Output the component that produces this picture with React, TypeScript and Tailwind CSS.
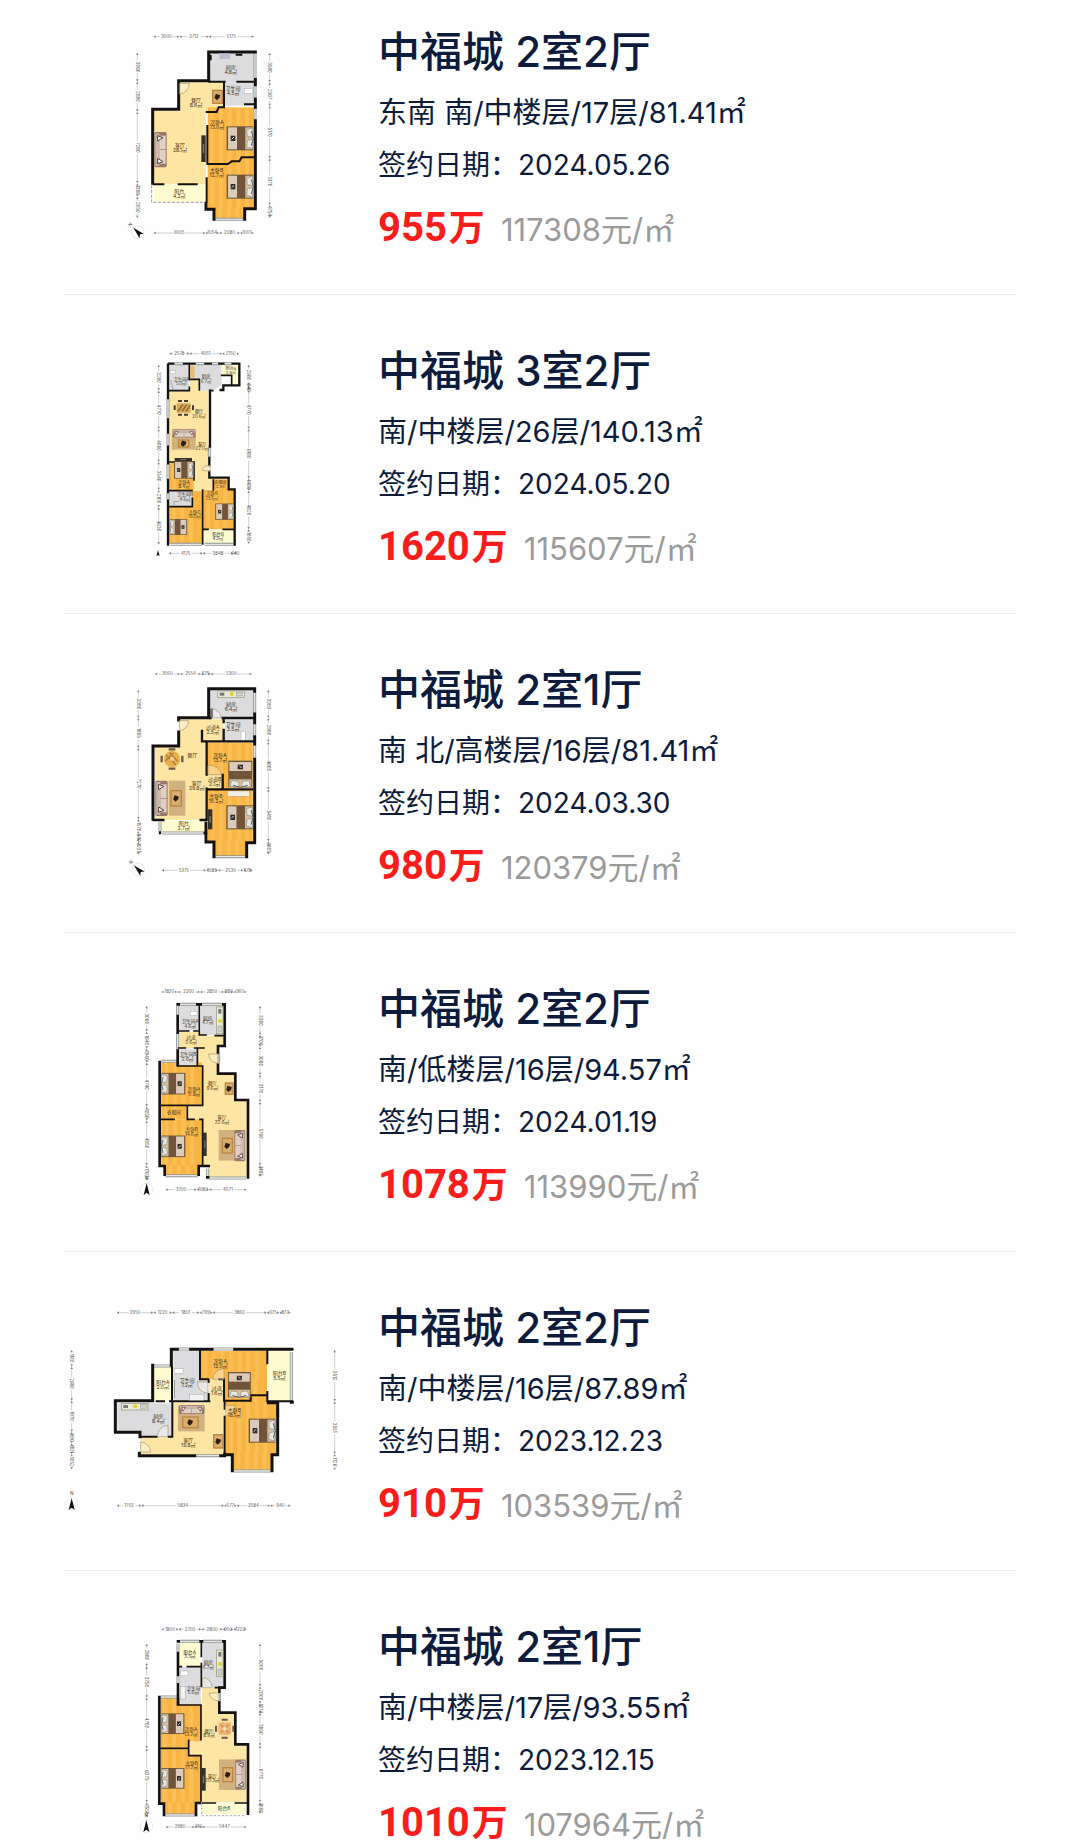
import type { ReactNode } from 'react';

const WALL = '#141210';
const CREAM = '#fde5a4';
const PALE = '#fefbd0';
const WOOD = '#f9b544';
const TILE = '#dcdcdf';

const Room = ({ points, fill }: { points: string; fill: string }) => <polygon points={points} fill={fill} />;

const Floor = ({ x, y, w, h }: { x: number; y: number; w: number; h: number }) => (
  <g>
    <rect x={x} y={y} width={w} height={h} fill={WOOD} />
    {Array.from({ length: Math.floor(w / 26) }, (_, i) => (
      <rect key={i} x={x + 8 + i * 26} y={y} width={12} height={h} fill="#fdc763" opacity={0.6} />
    ))}
  </g>
);

const Wall = ({ d, w = 9 }: { d: string; w?: number }) => (
  <path d={d} fill="none" stroke={WALL} strokeWidth={w} strokeLinecap="square" />
);

const Glass = ({ d }: { d: string }) => (
  <g fill="none">
    <path d={d} stroke="#8d9490" strokeWidth={9} />
    <path d={d} stroke="#e3e8e5" strokeWidth={4} />
  </g>
);

const Door = ({ d }: { d: string }) => <path d={d} fill="#fff" fillOpacity={0.35} stroke="#a39568" strokeWidth={2} />;

// head of the bed points right at 0 degrees
const Bed = ({ x, y, r = 0, s = 1 }: { x: number; y: number; r?: number; s?: number }) => (
  <g transform={`translate(${x} ${y}) rotate(${r}) scale(${s})`}>
    <rect x={-40} y={-36} width={80} height={72} fill="#6b563d" />
    <rect x={-36} y={-33} width={27} height={66} fill="#dccbb8" />
    <rect x={-9} y={-33} width={25} height={66} fill="#70553a" />
    <rect x={16} y={-33} width={24} height={66} fill="#d6c0a2" />
    <path d="M20 -26 L38 -31 L38 -3 L22 -6 Z M20 26 L38 31 L38 3 L22 6 Z" fill="#e9e6dd" stroke="#8d8c86" strokeWidth={2} />
    <path d="M34 -22 L40 0 L34 22" fill="none" stroke="#4e6470" strokeWidth={3} />
    <rect x={-28} y={-8} width={14} height={16} fill="#332b28" />
    <path d="M-25 3 L-18 -4" stroke="#ddd" strokeWidth={3} />
  </g>
);

const Sofa = ({ x, y, r = 0, s = 1 }: { x: number; y: number; r?: number; s?: number }) => (
  <g transform={`translate(${x} ${y}) rotate(${r}) scale(${s})`}>
    <rect x={-18} y={-53} width={37} height={106} rx={5} fill="#9a7869" />
    <rect x={-15} y={-49} width={12} height={98} fill="#cdb9ac" />
    <rect x={-3} y={-42} width={19} height={41} fill="#dfcfc5" />
    <rect x={-3} y={1} width={19} height={41} fill="#dfcfc5" />
    <path d="M-9 -42 L8 -36 L-8 -26 Z M-9 42 L8 36 L-8 26 Z" fill="#eee" stroke="#58423b" strokeWidth={3} />
  </g>
);

const Rug = ({ x, y, w, h }: { x: number; y: number; w: number; h: number }) => (
  <rect x={x} y={y} width={w} height={h} fill="#d2b180" />
);

const CoffeeTable = ({ x, y, w, h }: { x: number; y: number; w: number; h: number }) => (
  <g>
    <rect x={x} y={y} width={w} height={h} fill="#b98646" />
    <rect x={x + 4} y={y + 4} width={w - 8} height={h - 8} fill="#dcae6c" />
    <path d={`M${x + w / 2 - 9} ${y + h / 2 + 3} l4 -12 l13 4 l-2 8 l-8 7 z`} fill="#2a1d14" />
  </g>
);

const Dining = ({ x, y }: { x: number; y: number }) => (
  <g transform={`translate(${x} ${y})`}>
    <path d="M-10 -29 H10 M-10 29 H10 M-31 -10 V10 M31 -10 V10" stroke="#6b5848" strokeWidth={7} />
    <circle r={24} fill="#e8b04d" />
    <path d="M-18 -12 L12 18 M-8 -20 L18 8 M-20 6 L4 -18" stroke="#a97a3e" strokeWidth={4} />
    <circle r={6} fill="#f6d79a" />
  </g>
);

const Media = ({ x, y, w, h }: { x: number; y: number; w: number; h: number }) => (
  <g>
    <rect x={x} y={y} width={w} height={h} fill="#35302a" />
    <rect x={x + w / 3} y={y + h / 3} width={w / 3} height={h / 3} fill="#77726a" />
  </g>
);

const Counter = ({ x, y, r = 0 }: { x: number; y: number; r?: number }) => (
  <g transform={`translate(${x} ${y}) rotate(${r})`}>
    <rect x={-40} y={-10} width={80} height={20} fill="#ebead5" stroke="#908f75" strokeWidth={2} />
    <rect x={-34} y={-5} width={14} height={9} fill="#777" />
    <circle cx={2} cy={-1} r={6} fill="#e2cf2e" />
    <rect x={17} y={-6} width={18} height={11} fill="#cfcfcb" stroke="#777" />
  </g>
);

const Label = ({ x, y, name, area, s = 15 }: { x: number; y: number; name: string; area?: string; s?: number }) => (
  <text x={x} y={y} textAnchor="middle" fontSize={s} fill="#3d3420">
    {name}
    {area && <tspan x={x} dy={s}>{area}</tspan>}
  </text>
);

const Dims = ({ at, stops, labels, vertical = false }: { at: number; stops: number[]; labels: string[]; vertical?: boolean }) => (
  <g transform={vertical ? `translate(${at} 0) rotate(90)` : `translate(0 ${at})`}>
    {labels.map((label, i) => {
      const a = stops[i];
      const b = stops[i + 1];
      const half = label.length * 4 + 3;
      const mid = (a + b) / 2;
      return (
        <g key={i}>
          {b - a > half * 2 + 12 && (
            <path d={`M${a + 4} 0 H${mid - half} M${mid + half} 0 H${b - 4}`} stroke="#bbb" strokeWidth={2} />
          )}
          <path d={`M${a} 0 l7 -4 v8 z M${b} 0 l-7 -4 v8 z`} fill="#888" />
          <text x={mid} y={4} textAnchor="middle" fontSize={13} fill="#555">{label}</text>
        </g>
      );
    })}
  </g>
);

const Compass = ({ x, y, r = 0, ring = true }: { x: number; y: number; r?: number; ring?: boolean }) => (
  <g transform={`translate(${x} ${y}) rotate(${r})`}>
    {ring && <circle r={19} fill="#fff" stroke="#ddd" strokeWidth={2} />}
    {ring ? (
      <path d="M0 -19 L9 17 L0 10 L-9 17 Z" fill="#111" />
    ) : (
      <path d="M0 -10 L5 9 L0 5 L-5 9 Z" fill="#111" />
    )}
    {ring && <text x={0} y={-27} textAnchor="middle" fontSize={14} fill="#444">N</text>}
  </g>
);

const PlanA = () => (
  <g>
    <Room points="388,187 522,187 522,262 468,275 468,493 312,493 312,272 388,272" fill={CREAM} />
    <Room points="312,493 466,493 466,545 312,545" fill={PALE} />
    <Room points="478,97 612,97 612,187 478,187" fill={TILE} />
    <Room points="525,187 612,187 612,257 525,257" fill={TILE} />
    <Floor x={473} y={262} w={138} h={165} />
    <Floor x={473} y={418} w={138} h={152} />
    <Floor x={496} y={565} w={84} h={34} />
    <Glass d="M615 98 V172 M615 198 V232 M615 265 V298 M496 598 H580" />
    <Wall d="M476 180 V96 H616 M616 178 V194 M616 237 V262" />
    <Wall d="M476 182 H386 V268 H308 V490 M616 302 V566 H584 V598 M468 550 V568 H492 V598" />
    <Wall w={6} d="M482 118 V108 M560 104 H574 M522 190 V258 M478 185 H524 M562 185 H610 M585 253 H610 M522 262 H506 L500 276 H470 M472 318 V432 H534 L545 424 H568 L575 412 H610 M470 475 V545 M312 493 H340 M386 493 H440" />
    <path d="M305 496 V547 H464" fill="none" stroke="#666" strokeWidth={2} strokeDasharray="9 5" />
    <Door d="M388 190 H418 A32 32 0 0 1 388 222 Z" />
    <Sofa x={331} y={389} />
    <Media x={454} y={346} w={13} h={80} />
    <CoffeeTable x={486} y={209} w={33} h={43} />
    <rect x={508} y={100} width={32} height={17} fill="#babed0" />
    <rect x={583} y={206} width={25} height={14} fill="#fff" stroke="#999" />
    <Bed x={570} y={355} />
    <Bed x={570} y={500} />
    <Label x={542} y={148} name="厨房" area="4.8㎡" />
    <Label x={549} y={209} name="卫生间" area="4.5㎡" />
    <Label x={438} y={245} name="餐厅" area="8.6㎡" />
    <Label x={390} y={381} name="客厅" area="28.1㎡" />
    <Label x={501} y={312} name="次卧A" area="13.0㎡" />
    <Label x={500} y={456} name="主卧B" area="12.7㎡" />
    <Label x={388} y={518} name="阳台" area="4.2㎡" />
    <Dims at={50} stops={[310, 388, 476, 612]} labels={['3000', '2712', '5175']} />
    <Dims at={639} stops={[310, 466, 507, 570, 612]} labels={['6005', '1054', '2080', '1001']} />
    <Dims vertical at={262} stops={[98, 185, 275, 490, 530, 594]} labels={['3060', '2890', '7280', '1380', '2050']} />
    <Dims vertical at={659} stops={[98, 187, 258, 415, 555, 594]} labels={['3580', '2367', '5170', '5170', '1754']} />
    <Compass x={263} y={636} r={-45} />
  </g>
);

const PlanB = () => (
  <g>
    <Room points="357,75 418,75 418,152 357,152" fill={TILE} />
    <Room points="422,75 515,75 515,136 488,152 448,152 448,120 422,116" fill={TILE} />
    <Room points="515,75 568,75 568,135 545,135 545,108 515,108" fill={PALE} />
    <Room points="420,120 446,120 446,152 476,152 476,413 500,413 500,450 430,450 430,365 357,365 357,152 420,152" fill={CREAM} />
    <Floor x={357} y={368} w={74} h={82} />
    <Floor x={357} y={452} w={101} h={160} />
    <Floor x={460} y={450} w={91} h={118} />
    <Floor x={490} y={418} w={43} h={32} />
    <Room points="357,452 426,452 426,500 357,500" fill={TILE} />
    <Room points="461,569 551,569 551,611 461,611" fill={PALE} />
    <Glass d="M354 177 V235 M354 280 V317 M354 372 V418 M354 458 V480 M374 71 H398 M438 71 H462 M484 71 H506 M522 71 H546 M362 613 H456 M464 613 H550 M478 322 V352" />
    <Wall w={7} d="M357 71 H370 M402 71 H434 M466 71 H482 M508 71 H520 M548 71 H568 V136 H520 V150 H512 M354 74 V174 M354 238 V278 M354 320 V370 M354 420 V456 M354 482 V614 M480 152 V320 M478 354 V376 M478 395 V413 H536 V448 H554 V614" />
    <Wall w={5} d="M418 74 V118 H448 V150 M418 142 V152 H358 M358 366 H432 V420 M358 452 H426 M427 475 V500 H358 M458 450 V612 M462 568 H474 M520 568 H550 M490 420 V450 M515 106 H545 V134 M480 152 H488" />
    <rect x={420} y={77} width={14} height={37} fill="#e0c274" />
    <rect x={360} y={92} width={16} height={9} fill="#fff" stroke="#888" />
    <path d="M362 120 L370 150 M372 497 V484 H388" fill="none" stroke="#888" strokeWidth={2} />
    <Door d="M480 376 Q458 376 457 391 L480 394 Z" />
    <rect x={380} y={190} width={42} height={28} fill="#d6a95a" />
    <path d="M384 214 L398 194 M396 214 L410 194 M408 214 L420 196" stroke="#8a6230" strokeWidth={4} />
    <path d="M384 183 H396 M402 183 H414 M384 224 H396 M402 224 H414 M374 196 V210 M429 196 V210" stroke="#443a35" strokeWidth={6} />
    <Rug x={365} y={285} w={72} h={44} />
    <Sofa x={402} y={280} r={90} s={0.66} />
    <CoffeeTable x={384} y={298} w={34} h={25} />
    <Media x={374} y={354} w={52} h={9} />
    <Bed x={401} y={390} s={0.72} />
    <Bed x={523} y={515} s={0.68} />
    <Bed x={385} y={561} r={180} s={0.66} />
    <Label s={13} x={394} y={122} name="卫生间A" area="5.0㎡" />
    <Label s={13} x={468} y={115} name="厨房" area="6.7㎡" />
    <Label s={12} x={543} y={90} name="阳台A" area="2.9㎡" />
    <Label s={13} x={447} y={220} name="餐厅" area="20.6㎡" />
    <Label s={13} x={457} y={318} name="客厅" area="22.0㎡" />
    <Label s={13} x={402} y={431} name="次卧A" area="8.4㎡" />
    <Label s={12} x={511} y={432} name="衣帽间" area="2.1㎡" />
    <Label s={13} x={405} y={469} name="卫生间B" area="4.6㎡" />
    <Label s={13} x={486} y={466} name="次卧B" area="13.5㎡" />
    <Label s={13} x={434} y={521} name="主卧C" area="16.0㎡" />
    <Label s={13} x={504} y={588} name="阳台B" area="4.3㎡" />
    <Dims at={41} stops={[358, 418, 516, 568]} labels={['2578', '4051', '2150']} />
    <Dims at={640} stops={[356, 458, 550, 562]} labels={['4175', '3848', '640']} />
    <Dims vertical at={326} stops={[74, 152, 267, 366, 450, 502, 614]} labels={['3280', '4770', '4080', '3540', '2100', '4630']} />
    <Dims vertical at={596} stops={[74, 136, 150, 267, 416, 452, 568, 612]} labels={['2580', '640', '4770', '6180', '1480', '4820', '1810']} />
    <Compass x={324} y={640} ring={false} />
  </g>
);

const PlanC = () => (
  <g>
    <Room points="388,178 520,178 520,242 470,242 470,345 516,345 516,387 470,387 470,480 315,480 315,262 388,262" fill={CREAM} />
    <Room points="332,483 466,483 466,518 332,518" fill={PALE} />
    <Room points="480,90 610,90 610,174 480,174" fill={TILE} />
    <Room points="525,178 610,178 610,242 525,242" fill={TILE} />
    <Floor x={474} y={248} w={134} h={137} />
    <Floor x={474} y={388} w={134} h={158} />
    <Floor x={496} y={540} w={92} h={50} />
    <Room points="471,345 516,345 516,386 471,386" fill={CREAM} />
    <Glass d="M614 98 V158 M614 193 V226 M614 256 V294 M496 590 H586 M336 519 H464 M330 486 V514" />
    <Wall d="M476 170 V86 H614 V94 M614 162 V188 M614 230 V252 M614 298 V548 H590 V590 M476 173 H386 V180 M386 216 V258 H309 V478 M468 490 V546 H492 V590" />
    <Wall w={7} d="M485 170 V150 M480 174 H482 M518 174 H608 M521 178 V186 M521 210 V242 M456 213 V244 H608 M470 248 V344 M518 345 V386 M474 388 H528 M530 388 H606 M470 386 V480 M312 480 H340 M452 480 H466 M330 517 V519 M464 519 H468" />
    <Door d="M388 182 H416 A30 30 0 0 1 388 212 Z" />
    <Door d="M484 174 V146 A30 30 0 0 1 514 174 Z" />
    <Door d="M474 344 V316 A36 30 0 0 1 514 344 Z" />
    <Counter x={543} y={103} />
    <rect x={573} y={214} width={13} height={26} fill="#fff" stroke="#888" />
    <Dining x={366} y={297} />
    <Rug x={356} y={362} w={50} h={105} />
    <Sofa x={334} y={415} />
    <CoffeeTable x={361} y={390} w={35} h={50} />
    <Media x={474} y={448} w={13} h={60} />
    <Bed x={571} y={342} r={90} />
    <rect x={532} y={393} width={66} height={16} fill="#f4efe5" stroke="#9b8a6a" />
    <Bed x={569} y={472} />
    <Label x={543} y={139} name="厨房" area="6.4㎡" />
    <Label x={549} y={198} name="卫生间" area="3.5㎡" />
    <Label x={488} y={206} name="过道A" area="2.5㎡" />
    <Label x={427} y={290} name="餐厅" />
    <Label x={510} y={292} name="次卧A" area="13.7㎡" />
    <Label x={494} y={362} name="过道B" area="2.1㎡" />
    <Label x={440} y={376} name="客厅" area="29.8㎡" />
    <Label x={498} y={415} name="主卧B" area="15.2㎡" />
    <Label x={401} y={496} name="阳台" area="2.7㎡" />
    <Dims at={42} stops={[314, 390, 453, 482, 606]} labels={['3060', '2554', '675', '5300']} />
    <Dims at={631} stops={[335, 468, 504, 580, 606]} labels={['5375', '1085', '2530', '1010']} />
    <Dims vertical at={265} stops={[90, 174, 264, 478, 522, 545, 584]} labels={['3390', '1985', '7270', '1570', '940', '1035']} />
    <Dims vertical at={655} stops={[90, 174, 246, 388, 544, 584]} labels={['3393', '2980', '4600', '5410', '1605']} />
    <Compass x={265} y={629} r={-45} />
  </g>
);

const PlanD = () => (
  <g>
    <Room points="388,76 446,76 446,152 388,152" fill={TILE} />
    <Room points="452,76 520,76 520,165 452,165" fill={TILE} />
    <Room points="388,155 452,155 452,167 520,167 520,196 502,196 502,283 553,283 553,362 590,362 590,592 474,592 474,560 458,560 458,418 412,418 412,378 458,378 458,258 442,258 442,204 388,204" fill={CREAM} />
    <Floor x={334} y={247} w={122} h={128} />
    <Floor x={334} y={378} w={76} h={40} />
    <Floor x={334} y={418} w={122} h={140} />
    <Floor x={347} y={555} w={96} h={32} />
    <Room points="388,206 440,206 440,256 388,256" fill={TILE} />
    <Glass d="M390 73 H440 M455 73 H518 M383 78 V104 M383 160 V210 M334 244 H382 M347 587 H443 M476 594 H588 M473 566 V590 M506 222 V250" />
    <Wall w={8} d="M383 73 H386 M442 73 H452 M520 73 H524 V198 H504 V218 M383 108 V158 M383 212 V256 M329 246 V558 H344 V584 M504 254 V281 H556 V360 H594 V592 M446 584 V558 H476 M472 592 H474" />
    <Wall w={5} d="M448 76 V165 H468 M386 153 H416 M432 153 H448 M496 167 H520 M386 204 H406 M434 204 H462 M442 206 V258 H386 M386 258 H458 V376 H446 M458 376 H334 M412 378 V418 H432 M334 418 H372 M450 418 H458 V555" />
    <Door d="M506 222 H476 A30 28 0 0 0 506 250 Z" />
    <rect x={421} y={94} width={20} height={12} fill="#fff" stroke="#999" />
    <Counter x={509} y={121} r={90} />
    <CoffeeTable x={524} y={307} w={27} h={38} />
    <Rug x={506} y={450} w={50} h={92} />
    <Sofa x={570} y={497} r={180} s={0.88} />
    <CoffeeTable x={515} y={473} w={34} h={48} />
    <Media x={459} y={458} w={11} h={70} />
    <Bed x={370} y={311} r={180} s={0.9} />
    <Bed x={370} y={499} r={180} s={0.9} />
    <Label s={14} x={420} y={129} name="卫生间A" area="4.6㎡" />
    <Label s={14} x={473} y={119} name="厨房" area="4.7㎡" />
    <Label s={14} x={423} y={177} name="过道" area="2.6㎡" />
    <Label s={14} x={413} y={229} name="卫生间B" area="2.6㎡" />
    <Label s={14} x={487} y={316} name="餐厅" area="9.6㎡" />
    <Label s={14} x={432} y={334} name="次卧A" area="11.8㎡" />
    <Label s={14} x={372} y={402} name="衣帽间" />
    <Label s={14} x={516} y={418} name="客厅" area="22.6㎡" />
    <Label s={14} x={425} y={453} name="主卧B" area="14.6㎡" />
    <Dims at={36} stops={[334, 382, 450, 522, 550, 590]} labels={['1820', '2200', '2850', '980', '960']} />
    <Dims at={629} stops={[346, 440, 477, 590]} labels={['3700', '1080', '4571']} />
    <Dims vertical at={290} stops={[78, 155, 206, 248, 380, 422, 556, 600]} labels={['3060', '1640', '1940', '4740', '1050', '4950', '1763']} />
    <Dims vertical at={630} stops={[78, 165, 200, 285, 366, 556, 590]} labels={['3380', '1700', '3080', '3170', '5760', '1485']} />
    <Compass x={290} y={628} />
  </g>
);

const PlanE = () => (
  <g>
    <Room points="312,200 363,200 363,302 312,302" fill={PALE} />
    <Room points="202,310 366,310 366,410 274,410 274,395 202,395" fill={TILE} />
    <Room points="370,152 448,152 448,240 474,240 474,303 370,303" fill={TILE} />
    <Room points="370,308 478,308 478,240 520,240 520,308 524,308 524,463 272,463 272,412 370,412" fill={CREAM} />
    <Floor x={451} y={153} w={200} h={85} />
    <Floor x={524} y={236} w={127} h={66} />
    <Floor x={528} y={300} w={150} h={164} />
    <Floor x={604} y={288} w={47} h={20} />
    <Floor x={551} y={460} w={112} h={52} />
    <Room points="655,152 725,152 725,303 655,303" fill={PALE} />
    <Glass d="M386 147 H418 M490 147 H550 M438 467 H508 M552 513 H662 M310 198 H364 M724 156 V302 M370 240 V294 M683 325 V350" />
    <Wall d="M308 196 V302 H196 V397 H270 V410 M364 196 V148 H382 M422 148 H486 M554 148 H726 M268 460 V467 H434 M512 467 H524 V462 M530 464 H547 V512 M666 512 V464 H683 V308 H655 M724 307 H727" />
    <Wall w={6} d="M366 200 V303 M320 304 H342 M360 304 H478 M450 152 V238 H474 M476 240 V246 M476 282 V302 M524 308 V326 M524 350 V462 M508 238 H522 V302 H602 V286 H652 M652 152 V190 M652 276 V304 H726 M367 308 V410 H356 M272 410 H320" />
    <Door d="M272 426 A32 32 0 0 1 302 456 L272 456 Z" />
    <Door d="M322 410 A32 34 0 0 1 354 376 L354 410 Z" />
    <Door d="M474 246 H442 A32 34 0 0 0 474 280 Z" />
    <Door d="M522 238 V206 A34 32 0 0 0 488 238 Z" />
    <Door d="M526 316 H556 A30 32 0 0 1 526 348 Z" />
    <Counter x={254} y={320} />
    <rect x={372} y={206} width={27} height={14} fill="#fff" stroke="#888" />
    <rect x={418} y={283} width={44} height={18} fill="#f4f4f4" stroke="#888" />
    <Rug x={384} y={318} w={80} h={76} />
    <Sofa x={425} y={328} r={90} s={0.72} />
    <CoffeeTable x={396} y={349} w={50} h={36} />
    <CoffeeTable x={489} y={402} w={32} h={44} />
    <Bed x={568} y={254} r={90} s={0.95} />
    <Bed x={636} y={392} />
    <Label x={338} y={251} name="阳台A" area="2.0㎡" />
    <Label x={411} y={247} name="卫生间" area="7.2㎡" />
    <Label x={511} y={189} name="次卧A" area="12.0㎡" />
    <Label x={500} y={270} name="过道" area="1.6㎡" />
    <Label x={688} y={225} name="阳台B" area="5.5㎡" />
    <Label x={325} y={353} name="厨房" area="8.4㎡" />
    <Label x={415} y={426} name="客厅" area="19.8㎡" />
    <Label x={553} y={337} name="主卧B" area="18.1㎡" />
    <Dims at={38} stops={[200, 310, 366, 448, 488, 650, 688, 722]} labels={['2950', '1220', '1801', '799', '3862', '675', '877']} />
    <Dims at={617} stops={[200, 274, 522, 560, 660, 722]} labels={['1702', '5834', '577', '2584', '940']} />
    <Dims vertical at={65} stops={[150, 200, 302, 396, 430, 462, 508]} labels={['1100', '2680', '1970', '890', '1101', '1052']} />
    <Dims vertical at={854} stops={[150, 304, 462, 510]} labels={['3512', '3551', '1126']} />
    <Compass x={65} y={613} />
  </g>
);

const PlanF = () => (
  <g>
    <Room points="390,76 450,76 450,147 390,147" fill={PALE} />
    <Room points="457,76 520,76 520,210 457,210" fill={TILE} />
    <Room points="456,212 506,212 506,288 553,288 553,385 590,385 590,556 456,556 456,417 418,417 418,372 456,372" fill={CREAM} />
    <Room points="455,560 590,560 590,592 455,592" fill={PALE} />
    <Floor x={332} y={243} w={120} h={150} />
    <Floor x={332} y={397} w={120} h={162} />
    <Floor x={346} y={556} w={90} h={36} />
    <Room points="390,150 452,150 452,262 390,262" fill={TILE} />
    <Room points="418,373 456,373 456,417 418,417" fill={CREAM} />
    <Glass d="M390 73 H450 M458 73 H518 M384 80 V104 M384 178 V198 M332 240 H382 M346 594 H436 M508 228 V252" />
    <Wall w={8} d="M384 73 H386 M452 73 H456 M520 73 H524 V212 H508 V224 M384 108 V174 M384 202 V262 M328 240 V560 H342 V594 M508 256 V287 H556 V382 H594 V590 M438 594 V558 H450" />
    <Wall w={5} d="M454 76 V118 M454 140 V208 M388 149 H394 M412 149 H450 M388 264 H453 V368 M332 394 H416 V370 M416 396 V416 H453 V552 M496 212 H520 M458 558 H496 M556 558 H590" />
    <path d="M455 560 V596 H588" fill="none" stroke="#888" strokeWidth={2} strokeDasharray="7 5" />
    <Door d="M508 228 H478 A30 24 0 0 0 508 252 Z" />
    <Door d="M458 212 V182 A28 28 0 0 1 486 212 Z" />
    <Counter x={509} y={139} r={90} />
    <rect x={392} y={162} width={22} height={14} fill="#fff" stroke="#888" />
    <rect x={392} y={208} width={14} height={38} fill="#f4f4f4" stroke="#888" />
    <g transform="translate(524 335)">
      <path d="M-9 -27 H9 M-9 27 H9 M-26 -9 V9 M26 -9 V9" stroke="#6b5848" strokeWidth={6} />
      <rect x={-19} y={-19} width={38} height={38} rx={7} fill="#efb878" />
      <path d="M-12 -12 L12 12 M12 -12 L-12 12" stroke="#d08b55" strokeWidth={4} />
      <circle r={6} fill="#f7dfb4" />
    </g>
    <Rug x={507} y={427} w={50} h={92} />
    <Sofa x={572} y={473} r={180} s={0.86} />
    <CoffeeTable x={517} y={450} w={33} h={46} />
    <Media x={454} y={453} w={13} h={68} />
    <Bed x={369} y={320} r={180} s={0.86} />
    <Bed x={369} y={484} r={180} s={0.86} />
    <Label s={14} x={419} y={110} name="阳台A" area="3.3㎡" />
    <Label s={14} x={475} y={142} name="厨房" area="6.7㎡" />
    <Label s={14} x={430} y={218} name="卫生间" area="5.6㎡" />
    <Label s={14} x={423} y={343} name="次卧A" area="13.2㎡" />
    <Label s={14} x={477} y={347} name="餐厅" area="8.9㎡" />
    <Label s={14} x={425} y={443} name="主卧B" area="17.2㎡" />
    <Label s={14} x={487} y={482} name="客厅" area="20.3㎡" />
    <Label s={14} x={522} y={580} name="阳台B" />
    <Dims at={37} stops={[334, 386, 454, 518, 550, 590]} labels={['1800', '2700', '2800', '950', '1222']} />
    <Dims at={630} stops={[346, 434, 456, 590]} labels={['2980', '740', '5447']} />
    <Dims vertical at={290} stops={[80, 148, 242, 394, 556, 600]} labels={['2880', '3750', '4700', '6375', '1550']} />
    <Dims vertical at={630} stops={[80, 208, 260, 288, 386, 556, 590]} labels={['5000', '2000', '1074', '3850', '6770', '1080']} />
    <Compass x={289} y={628} />
  </g>
);

interface Deal {
  title: string;
  summary: string;
  signed: string;
  price: string;
  unitPrice: string;
  viewBox: string;
  plan: ReactNode;
}

const deals: Deal[] = [
  { title: '中福城 2室2厅', summary: '东南 南/中楼层/17层/81.41㎡', signed: '2024.05.26', price: '955', unitPrice: '117308', viewBox: '42 0 840 690', plan: <PlanA /> },
  { title: '中福城 3室2厅', summary: '南/中楼层/26层/140.13㎡', signed: '2024.05.20', price: '1620', unitPrice: '115607', viewBox: '42 -3 840 690', plan: <PlanB /> },
  { title: '中福城 2室1厅', summary: '南 北/高楼层/16层/81.41㎡', signed: '2024.03.30', price: '980', unitPrice: '120379', viewBox: '42 -6 840 690', plan: <PlanC /> },
  { title: '中福城 2室2厅', summary: '南/低楼层/16层/94.57㎡', signed: '2024.01.19', price: '1078', unitPrice: '113990', viewBox: '42 -9 840 690', plan: <PlanD /> },
  { title: '中福城 2室2厅', summary: '南/中楼层/16层/87.89㎡', signed: '2023.12.23', price: '910', unitPrice: '103539', viewBox: '42 -12 840 690', plan: <PlanE /> },
  { title: '中福城 2室1厅', summary: '南/中楼层/17层/93.55㎡', signed: '2023.12.15', price: '1010', unitPrice: '107964', viewBox: '42 -6 840 690', plan: <PlanF /> },
];

export default function App() {
  return (
    <main className="h-screen overflow-hidden bg-[#fefefe] px-16 font-['Inter','Noto_Sans_CJK_SC',sans-serif] text-[#0d1c3c]">
      <ul>
        {deals.map((deal) => (
          <li key={deal.signed} className="flex gap-[34px] border-b border-[#eeeeee] pt-11 pb-[34px] first:pt-5 last:pb-0">
            <svg viewBox={deal.viewBox} className="h-[230px] w-[280px] shrink-0" role="img" aria-label={deal.title}>
              {deal.plan}
            </svg>
            <div className="min-w-0 flex-1">
              <h2 className="text-[42px] leading-16 font-medium">{deal.title}</h2>
              <p className="mt-0.5 text-[29px] leading-[53px]">{deal.summary}</p>
              <p className="text-[28px] leading-[53px]">签约日期：{deal.signed}</p>
              <div className="mt-1 flex h-16 items-baseline gap-4 leading-16">
                <p className="font-['Roboto','Noto_Sans_CJK_SC',sans-serif] text-[40px] font-bold text-[#fb1c1c]">
                  {deal.price}
                  <span className="ml-0.5 text-[36px]">万</span>
                </p>
                <p className="text-[31px] text-[#9b9b9b]">{deal.unitPrice}元/㎡</p>
              </div>
            </div>
          </li>
        ))}
      </ul>
    </main>
  );
}
